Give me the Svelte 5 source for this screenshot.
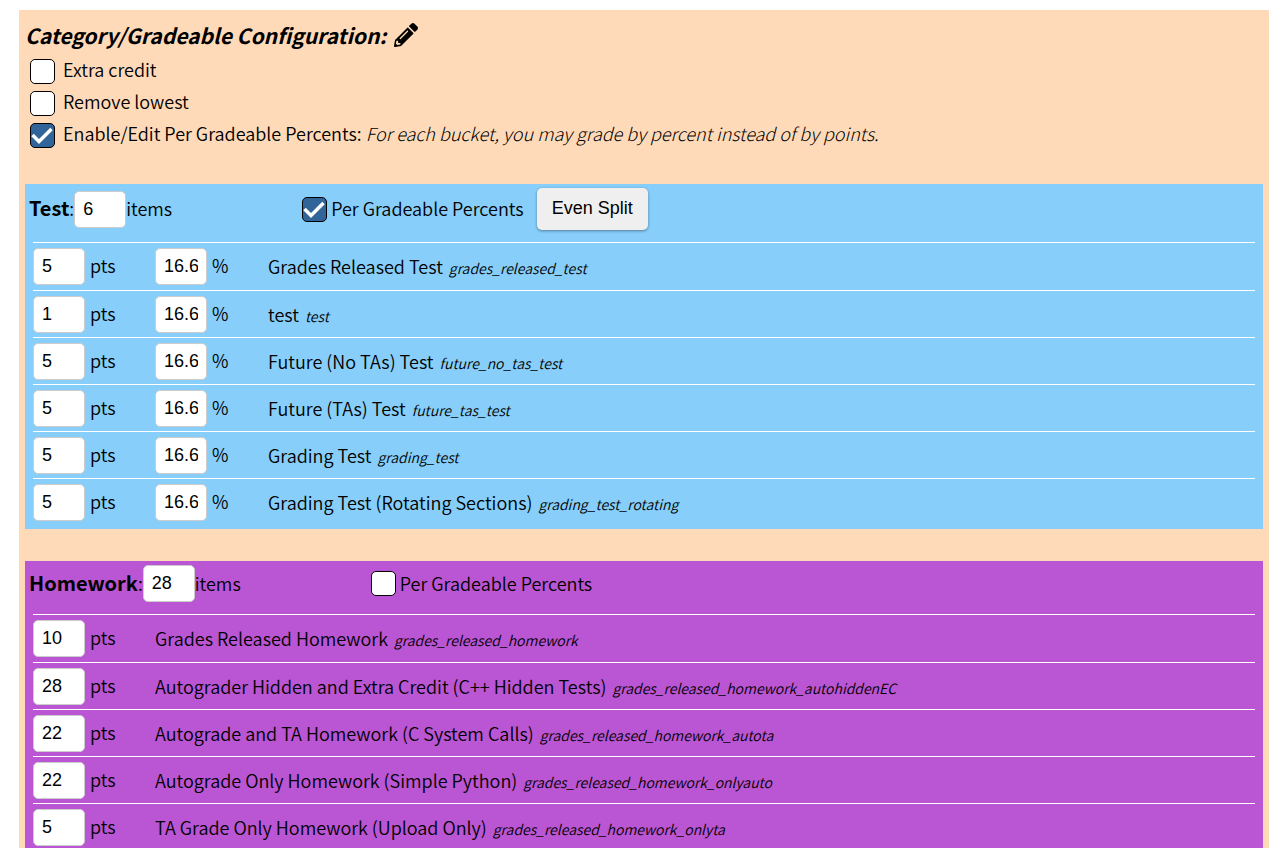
<script>
  const options = $state([
    { id: 'extra-credit', label: 'Extra credit', checked: false },
    { id: 'remove-lowest', label: 'Remove lowest', checked: false },
    {
      id: 'per-gradeable',
      label: 'Enable/Edit Per Gradeable Percents:',
      note: 'For each bucket, you may grade by percent instead of by points.',
      checked: true
    }
  ]);

  const buckets = $state([
    {
      id: 'test',
      name: 'Test',
      count: '6',
      percents: true,
      items: [
        { points: '5', percent: '16.6', title: 'Grades Released Test', key: 'grades_released_test' },
        { points: '1', percent: '16.6', title: 'test', key: 'test' },
        { points: '5', percent: '16.6', title: 'Future (No TAs) Test', key: 'future_no_tas_test' },
        { points: '5', percent: '16.6', title: 'Future (TAs) Test', key: 'future_tas_test' },
        { points: '5', percent: '16.6', title: 'Grading Test', key: 'grading_test' },
        { points: '5', percent: '16.6', title: 'Grading Test (Rotating Sections)', key: 'grading_test_rotating' }
      ]
    },
    {
      id: 'homework',
      name: 'Homework',
      count: '28',
      percents: false,
      items: [
        { points: '10', percent: '', title: 'Grades Released Homework', key: 'grades_released_homework' },
        { points: '28', percent: '', title: 'Autograder Hidden and Extra Credit (C++ Hidden Tests)', key: 'grades_released_homework_autohiddenEC' },
        { points: '22', percent: '', title: 'Autograde and TA Homework (C System Calls)', key: 'grades_released_homework_autota' },
        { points: '22', percent: '', title: 'Autograde Only Homework (Simple Python)', key: 'grades_released_homework_onlyauto' },
        { points: '5', percent: '', title: 'TA Grade Only Homework (Upload Only)', key: 'grades_released_homework_onlyta' }
      ]
    }
  ]);

  function evenSplit(bucket) {
    const share = (Math.floor(1000 / bucket.items.length) / 10).toString();
    for (const item of bucket.items) item.percent = share;
  }
</script>

<main class="config">
  <h1>
    Category/Gradeable Configuration:
    <svg class="pencil" viewBox="0 0 512 512" aria-hidden="true">
      <path
        d="M497.9 142.1l-46.1 46.1c-4.7 4.7-12.3 4.7-17 0l-111-111c-4.7-4.7-4.7-12.3 0-17l46.1-46.1c18.7-18.7 49.1-18.7 67.9 0l60.1 60.1c18.8 18.7 18.8 49.1 0 68zM284.2 99.8L21.6 362.4.4 483.9c-2.9 16.4 11.4 30.6 27.8 27.8l121.5-21.3 262.6-262.6c4.7-4.7 4.7-12.3 0-17l-111-111c-4.8-4.7-12.4-4.7-17.1 0zM124.1 339.9c-5.5-5.5-5.5-14.3 0-19.8l154-154c5.5-5.5 14.3-5.5 19.8 0s5.5 14.3 0 19.8l-154 154c-5.5 5.5-14.3 5.5-19.8 0zM88 424h48v36.3l-64.5 11.3-31.1-31.1L51.7 376H88v48z"
      />
    </svg>
  </h1>

  <div class="options">
    {#each options as option (option.id)}
      <div class="option">
        <input type="checkbox" id={option.id} bind:checked={option.checked} />
        <label for={option.id}>{option.label}{#if option.note}{' '}<em>{option.note}</em>{/if}</label>
      </div>
    {/each}
  </div>

  {#each buckets as bucket (bucket.id)}
    <section class="bucket {bucket.id}">
      <header>
        <label for="{bucket.id}-count"><b>{bucket.name}</b>:</label>
        <input type="text" id="{bucket.id}-count" bind:value={bucket.count} />
        <span class="unit">items</span>
        <input class="toggle" type="checkbox" id="{bucket.id}-percents" bind:checked={bucket.percents} />
        <label for="{bucket.id}-percents">Per Gradeable Percents</label>
        {#if bucket.percents}
          <button type="button" onclick={() => evenSplit(bucket)}>Even Split</button>
        {/if}
      </header>
      <ul>
        {#each bucket.items as item (item.key)}
          <li>
            <div class="field">
              <input type="text" id="{item.key}-points" bind:value={item.points} />
              <label for="{item.key}-points">pts</label>
            </div>
            {#if bucket.percents}
              <div class="field percent">
                <input type="text" id="{item.key}-percent" bind:value={item.percent} />
                <label for="{item.key}-percent">%</label>
              </div>
            {/if}
            <p>{item.title} <em>{item.key}</em></p>
          </li>
        {/each}
      </ul>
    </section>
  {/each}
</main>

<style>
  :global(body) {
    background: #fff;
  }

  .config {
    box-sizing: border-box;
    margin: 10px 17px 0 19px;
    padding: 10px 6px 20px;
    background: #ffdab9;
    color: #000;
    font-family: 'Noto Sans CJK SC', 'Noto Sans', sans-serif;
    font-size: 18px;
    font-weight: 350;
    line-height: 24px;
  }

  h1 {
    display: flex;
    align-items: center;
    gap: 8px;
    margin: 0;
    font-size: 21px;
    font-weight: 700;
    font-style: italic;
    line-height: 30px;
  }

  .pencil {
    width: 24px;
    height: 24px;
  }

  .options {
    display: grid;
    gap: 7px;
    padding: 9px 5px 36px;
  }

  .option {
    display: flex;
    gap: 8px;
  }

  .option label {
    line-height: 20px;
  }

  .option em {
    font-weight: 300;
  }

  input,
  button {
    box-sizing: border-box;
    flex: none;
    margin: 0;
    color: #000;
    font-family: 'Liberation Sans', Arial, sans-serif;
    font-size: 18px;
  }

  input[type='checkbox'] {
    appearance: none;
    width: 25px;
    height: 25px;
    border: 1px solid #000;
    border-radius: 5px;
    background: #fff;
  }

  input[type='checkbox']:checked {
    background: #316498
      url("data:image/svg+xml,%3Csvg xmlns='http://www.w3.org/2000/svg' viewBox='0 0 23 23'%3E%3Cpath d='M1.500 11 8 17.500 20.500 5' fill='none' stroke='white' stroke-width='3.500'/%3E%3C/svg%3E")
      center / 23px 23px no-repeat;
  }

  input[type='text'] {
    width: 52px;
    height: 37px;
    padding: 0 8px;
    border: 1px solid #ccc;
    border-radius: 5px;
    background: #fff;
  }

  .bucket {
    margin-bottom: 32px;
    padding-bottom: 4px;
  }

  .test {
    background: #87cefa;
  }

  .homework {
    background: #ba55d3;
  }

  header {
    display: flex;
    align-items: center;
    padding: 4px 4px 12px;
  }

  header label,
  .unit {
    padding-bottom: 2px;
  }

  header b {
    font-size: 20px;
    font-weight: 700;
  }

  header .toggle {
    margin-left: 130px;
    margin-right: 4px;
  }

  button {
    height: 42px;
    margin-left: 13px;
    padding: 0 15px 2px;
    border: 0;
    border-radius: 5px;
    background: #efefef;
    box-shadow: 0 1px 3px rgba(0, 0, 0, 0.4);
  }

  ul {
    margin: 0 8px;
    padding: 0;
    list-style: none;
  }

  li {
    display: flex;
    align-items: center;
    padding: 5px 0 4px;
    border-top: 1px solid #fff;
  }

  li:first-child {
    padding-bottom: 5px;
  }

  .field {
    display: flex;
    align-items: center;
    gap: 5px;
    width: 122px;
  }

  .field label {
    padding-bottom: 4px;
  }

  .percent {
    width: 113px;
  }

  p {
    margin: 0;
  }

  p em {
    margin-left: 2px;
    font-size: 14px;
  }
</style>
